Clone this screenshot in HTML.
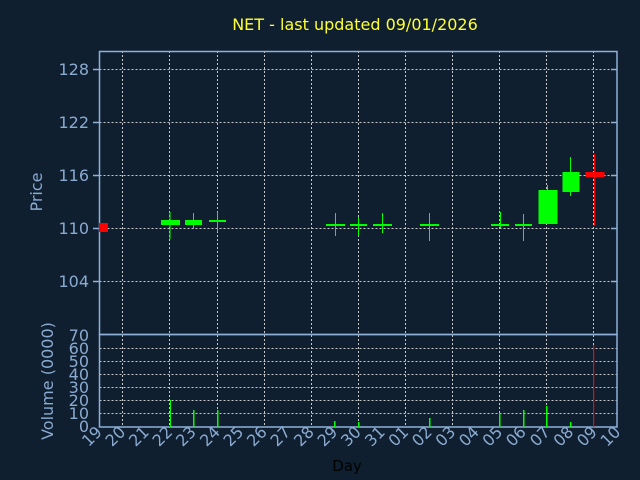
<!DOCTYPE html>
<html><head><meta charset="utf-8"><style>
html,body{margin:0;padding:0;background:#0f1f30;}
svg{display:block;font-family:"DejaVu Sans","Liberation Sans",sans-serif;}
</style></head><body>
<svg width="640" height="480" viewBox="0 0 640 480" xmlns="http://www.w3.org/2000/svg">
<rect width="640" height="480" fill="#0f1f30"/>
<text x="355" y="30" fill="#ffff33" font-size="16" text-anchor="middle">NET - last updated 09/01/2026</text>
<g stroke="#c8c8c8" stroke-width="1" stroke-dasharray="2,2" fill="none">
<path d="M99.5 69.5H617M99.5 122.5H617M99.5 175.5H617M99.5 228.5H617M99.5 281.5H617"/>
<path d="M99.5 348.5H617M99.5 361.5H617M99.5 374.5H617M99.5 387.5H617M99.5 400.5H617M99.5 413.5H617"/>
<path d="M122.5 51V427M169.5 51V427M217.5 51V427M264.5 51V427M311.5 51V427M358.5 51V427M405.5 51V427M452.5 51V427M499.5 51V427M546.5 51V427M593.5 51V427"/>
</g>
<g stroke="#8fb0d8" stroke-width="1.5" fill="none">
<rect x="99.5" y="51.5" width="517.5" height="283"/>
<rect x="99.5" y="334.5" width="517.5" height="92.5"/>
<path d="M93 69.5h6M93 122.5h6M93 175.5h6M93 228.5h6M93 281.5h6M611 69.5h6M611 122.5h6M611 175.5h6M611 228.5h6M611 281.5h6"/>
</g>
<g fill="#8aaad0" font-size="16" text-anchor="end">
<text x="89" y="75">128</text><text x="89" y="128">122</text><text x="89" y="181">116</text><text x="89" y="234">110</text><text x="89" y="287">104</text>
<text x="89" y="341">70</text><text x="89" y="354">60</text><text x="89" y="367">50</text><text x="89" y="380">40</text><text x="89" y="393">30</text><text x="89" y="406">20</text><text x="89" y="419">10</text><text x="89" y="432">0</text>
</g>
<text transform="translate(42,192) rotate(-90)" fill="#8aaad0" font-size="16" text-anchor="middle">Price</text>
<text transform="translate(53,381) rotate(-90)" fill="#8aaad0" font-size="16" text-anchor="middle">Volume (0000)</text>
<text x="347" y="471" fill="#000" font-size="15" text-anchor="middle">Day</text>
<g fill="#8aaad0" font-size="16" text-anchor="end">
<text transform="translate(103,433) rotate(-45)">19</text>
<text transform="translate(126.5,433) rotate(-45)">20</text>
<text transform="translate(150,433) rotate(-45)">21</text>
<text transform="translate(173.5,433) rotate(-45)">22</text>
<text transform="translate(197,433) rotate(-45)">23</text>
<text transform="translate(221,433) rotate(-45)">24</text>
<text transform="translate(244.5,433) rotate(-45)">25</text>
<text transform="translate(268,433) rotate(-45)">26</text>
<text transform="translate(291.5,433) rotate(-45)">27</text>
<text transform="translate(315,433) rotate(-45)">28</text>
<text transform="translate(338.5,433) rotate(-45)">29</text>
<text transform="translate(362,433) rotate(-45)">30</text>
<text transform="translate(386,433) rotate(-45)">31</text>
<text transform="translate(409.5,433) rotate(-45)">01</text>
<text transform="translate(433,433) rotate(-45)">02</text>
<text transform="translate(456.5,433) rotate(-45)">03</text>
<text transform="translate(480,433) rotate(-45)">04</text>
<text transform="translate(503.5,433) rotate(-45)">05</text>
<text transform="translate(527,433) rotate(-45)">06</text>
<text transform="translate(551,433) rotate(-45)">07</text>
<text transform="translate(574.5,433) rotate(-45)">08</text>
<text transform="translate(598,433) rotate(-45)">09</text>
<text transform="translate(621.5,433) rotate(-45)">10</text>
</g>
<g fill="#00ff00" stroke="none">
<rect x="169.5" y="212" width="1" height="27"/><rect x="161" y="220" width="19" height="5"/>
<rect x="193" y="213" width="1" height="16"/><rect x="185" y="220" width="17" height="5"/>
<rect x="217" y="212" width="1" height="20"/><rect x="209" y="220" width="17" height="2"/>
<rect x="335" y="213" width="1" height="23"/><rect x="326" y="224" width="19" height="2"/>
<rect x="358" y="217" width="1" height="19"/><rect x="350" y="224" width="17" height="2"/>
<rect x="382" y="213" width="1" height="20"/><rect x="373" y="224" width="19" height="2"/>
<rect x="429" y="213" width="1" height="28"/><rect x="420" y="224" width="19" height="2"/>
<rect x="500" y="212" width="1" height="16"/><rect x="491" y="224" width="18" height="2"/>
<rect x="523" y="214" width="1" height="27"/><rect x="515" y="224" width="17" height="2"/>
<rect x="547" y="185" width="1" height="6"/><rect x="538.5" y="190" width="19" height="34"/>
<rect x="570" y="157" width="1" height="39"/><rect x="562.5" y="172" width="17" height="20"/>
</g>
<g fill="#ff0000">
<rect x="99" y="223" width="9" height="9"/>
<rect x="594" y="154" width="1" height="72"/><rect x="585.5" y="172" width="19" height="5"/>
</g>
<g fill="#00ff00">
<rect x="170" y="400" width="1" height="27"/>
<rect x="193" y="410" width="1.5" height="17"/>
<rect x="217" y="410" width="1.5" height="17"/>
<rect x="334" y="421" width="1.5" height="6"/>
<rect x="358" y="422" width="1.5" height="5"/>
<rect x="429" y="418" width="1.5" height="9"/>
<rect x="499" y="414" width="1.5" height="13"/>
<rect x="523" y="410" width="1.5" height="17"/>
<rect x="546" y="406" width="1.5" height="21"/>
<rect x="570" y="422" width="1.5" height="5"/>
</g>
<rect x="593" y="345" width="1.2" height="82" fill="#ff0000"/>
</svg>
</body></html>
